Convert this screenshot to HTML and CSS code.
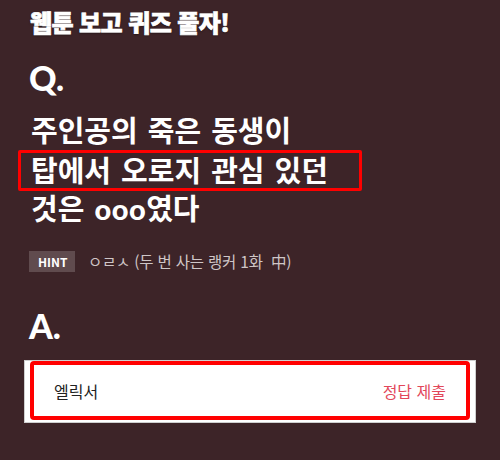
FILE: index.html
```html
<!DOCTYPE html>
<html lang="ko">
<head>
    <meta charset="UTF-8">
    <meta name="viewport" content="width=device-width, initial-scale=1.0">
    <title>웹툰 보고 퀴즈 풀자!</title>
    <link rel="stylesheet" href="styles.css">
</head>
<body>
    <main class="quiz">
        <h1 class="quiz-title">웹툰 보고 퀴즈 풀자!</h1>

        <div class="mark mark-q">Q.</div>
        <p class="question">
            <span class="line">주인공의 죽은 동생이</span>
            <span class="line highlight">탑에서 오로지 관심 있던</span>
            <span class="line">것은 <span class="blank">ooo</span>였다</span>
        </p>

        <div class="hint">
            <span class="hint-badge">HINT</span>
            <span class="hint-text">ㅇㄹㅅ (두 번 사는 랭커 1화&nbsp; 中)</span>
        </div>

        <div class="mark mark-a">A.</div>
        <div class="answer">
            <div class="answer-inner">
                <span class="answer-value">엘릭서</span>
                <span class="answer-submit">정답 제출</span>
            </div>
        </div>
    </main>
</body>
</html>
```

FILE: styles.css
```css
body {
    margin: 0;
    padding: 0;
    background-color: #3d2428;
    color: #ffffff;
    font-family: "Noto Sans CJK KR", "Noto Sans", sans-serif;
    width: 500px;
    height: 460px;
    overflow: hidden;
}
.quiz {
    padding: 8px 24px 0 24px;
}
.quiz-title {
    margin: 0 0 0 6px;
    font-size: 24px;
    line-height: 28px;
    font-weight: 900;
    letter-spacing: -0.6px;
    -webkit-text-stroke: 0.7px #ffffff;
    text-shadow: 0 1px 2px rgba(0,0,0,0.5);
}
.mark {
    font-family: Lato, "Noto Sans CJK KR", sans-serif;
    font-weight: 900;
    font-size: 34px;
    line-height: 40px;
    margin-left: 5px;
}
.mark-q {
    margin-top: 22px;
}
.question {
    margin: 13px 0 0 0;
    font-family: Lato, "Noto Sans CJK KR", sans-serif;
    font-size: 29px;
    font-weight: 700;
    line-height: 39px;
    word-spacing: 3px;
}
.question .line {
    display: block;
    padding-left: 7px;
}
.question .blank {
    font-weight: 900;
    letter-spacing: 0.5px;
}
.question .highlight {
    box-sizing: border-box;
    margin-left: -6px;
    padding-left: 10px;
    width: 344px;
    border: 3px solid #ff0000;
    border-radius: 2px;
    margin-top: 0;
    margin-bottom: -2px;
    line-height: 35px;
}
.hint {
    display: flex;
    align-items: center;
    margin: 22px 0 0 5px;
}
.hint-badge {
    background-color: #604b4e;
    font-size: 12px;
    font-weight: 700;
    line-height: 21px;
    padding: 0 9px;
    width: 28px;
}
.hint-text {
    margin-left: 13px;
    font-size: 15.5px;
    color: #cfc6c7;
    letter-spacing: -0.2px;
}
.mark-a {
    margin-top: 34px;
}
.answer {
    margin-top: 14px;
    background-color: #ffffff;
    border: 1px solid #cfcfcf;
    padding: 0 5px 2px 5px;
}
.answer-inner {
    display: flex;
    justify-content: space-between;
    align-items: center;
    height: 51px;
    padding: 0 20px;
    border: 4px solid #ff0000;
    border-radius: 4px;
    font-size: 16px;
}
.answer-value {
    color: #222222;
}
.answer-submit {
    color: #e2475a;
}
```
